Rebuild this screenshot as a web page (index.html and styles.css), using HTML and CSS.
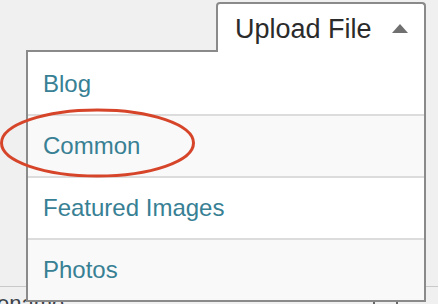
FILE: index.html
```html
<!DOCTYPE html>
<html lang="en">
<head>
<meta charset="utf-8">
<title>Upload File</title>
<link rel="stylesheet" href="styles.css">
</head>
<body>
<div class="backdrop">
  <div class="rule"></div>
  <div class="bottom-row">
    <span class="caption">ename</span>
    <span class="mini-box"></span>
  </div>
</div>

<div class="dropdown">
  <div class="tab">
    <span class="tab-label">Upload File</span>
    <span class="caret"></span>
  </div>
  <ul class="menu">
    <li class="item">Blog</li>
    <li class="item alt">Common</li>
    <li class="item">Featured Images</li>
    <li class="item alt">Photos</li>
  </ul>
</div>

<svg class="annotation" width="198" height="72" viewBox="0 0 198 72" aria-hidden="true">
  <ellipse cx="97.5" cy="35" rx="96" ry="33" fill="none" stroke="#d6452a" stroke-width="3"/>
</svg>
</body>
</html>
```

FILE: styles.css
```css
html, body {
  margin: 0;
  padding: 0;
}

body {
  width: 438px;
  height: 304px;
  overflow: hidden;
  position: relative;
  background: #f0f0f1;
  font-family: "Liberation Sans", Arial, Helvetica, sans-serif;
}

.backdrop {
  padding-top: 286px;
}

.rule {
  height: 1px;
  background: #c9c9c9;
}

.bottom-row {
  display: flex;
  align-items: flex-start;
  height: 17px;
}

.caption {
  flex: 0 0 60px;
  margin-left: -3px;
  margin-top: 6px;
  font-size: 22px;
  line-height: 22px;
  color: #3c434a;
  white-space: nowrap;
}

.mini-box {
  margin-left: 309px;
  margin-top: 14px;
  width: 21px;
  height: 10px;
  border-left: 2px solid #666;
  border-right: 2px solid #666;
}

.dropdown {
  position: absolute;
  left: 26px;
  top: 2px;
  width: 400px;
  display: flex;
  flex-direction: column;
}

.tab {
  position: relative;
  z-index: 1;
  align-self: flex-end;
  box-sizing: border-box;
  width: 210px;
  height: 50px;
  margin-bottom: -2px;
  padding: 9px 0 0 17px;
  display: flex;
  align-items: flex-start;
  background: #fff;
  border: 2px solid #8a8a8a;
  border-bottom: none;
  border-radius: 4px 4px 0 0;
}

.tab-label {
  font-size: 27px;
  line-height: 32px;
  color: #2b2b2b;
}

.caret {
  margin-left: auto;
  margin-right: 16px;
  margin-top: 11px;
  width: 0;
  height: 0;
  border-left: 8px solid transparent;
  border-right: 8px solid transparent;
  border-bottom: 9px solid #707070;
}

.menu {
  list-style: none;
  margin: 0;
  padding: 2px 0 0 0;
  background: #fff;
  border: 2px solid #8a8a8a;
}

.item {
  box-sizing: border-box;
  height: 62px;
  padding-left: 15px;
  display: flex;
  align-items: center;
  font-size: 24px;
  color: #388094;
  background: #fff;
  border-bottom: 2px solid #dcdcdc;
}

.item:last-child {
  border-bottom: none;
  height: 60px;
}

.item.alt {
  background: #f9f9f9;
}

.annotation {
  position: absolute;
  left: 0;
  top: 108px;
}
```
